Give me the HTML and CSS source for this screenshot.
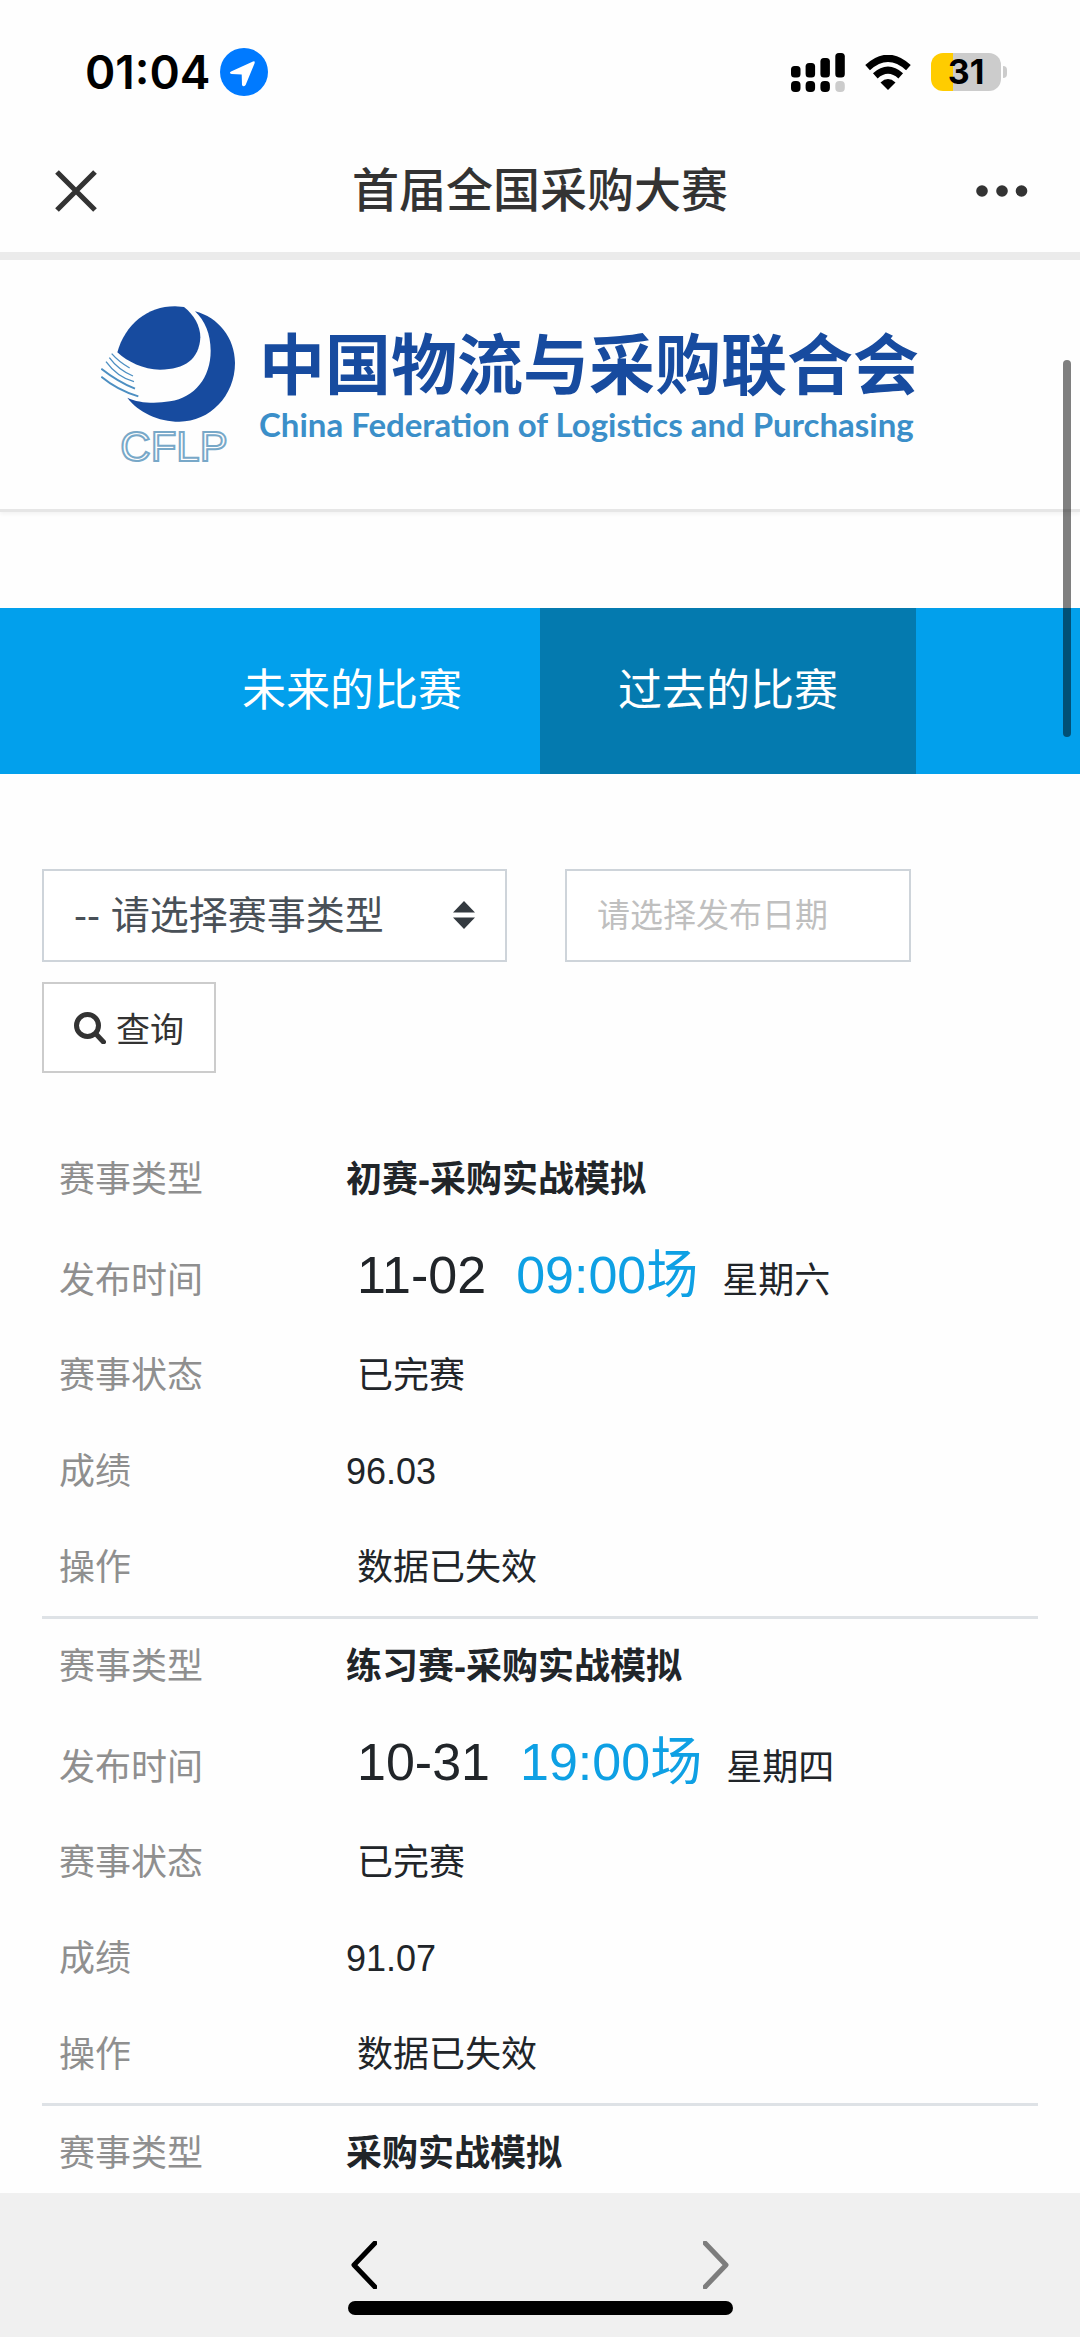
FILE: index.html
```html
<!DOCTYPE html>
<html lang="zh-CN">
<head>
<meta charset="utf-8">
<meta name="viewport" content="width=device-width, initial-scale=1">
<title>首届全国采购大赛</title>
<link rel="stylesheet" href="styles.css">
</head>
<body>
<div class="status-bar">
  <div class="status-left">
    <span class="clock">01:04</span>
    <svg class="location-icon" viewBox="0 0 48 48" aria-hidden="true"><circle cx="24" cy="24" r="24" fill="#007aff"/><path d="M11 23.400 33 13.400Q35.500 12.600 34.600 15.200L25.600 37Q23.400 39.600 22 37L21.700 26.600 11.600 26Q8.600 25 11 23.400Z" fill="#fff"/></svg>
  </div>
  <div class="status-right">
    <svg class="signal-icon" viewBox="0 0 54 39" aria-hidden="true"><g fill="#000"><rect x="0" y="13" width="9.500" height="11.500" rx="3.500"/><rect x="14.600" y="10" width="9.500" height="14.500" rx="3.500"/><rect x="29.400" y="5" width="9.500" height="19.500" rx="3.500"/><rect x="44.300" y="0" width="9.500" height="24.500" rx="3.500"/><rect x="0" y="28" width="9.500" height="11" rx="4"/><rect x="14.600" y="28" width="9.500" height="11" rx="4"/><rect x="29.400" y="28" width="9.500" height="11" rx="4"/></g><rect x="44.300" y="28" width="9.500" height="11" rx="4" fill="#ccc"/></svg>
    <svg class="wifi-icon" viewBox="0 0 46 35" aria-hidden="true"><path d="M2.600 12.600Q23-6 43.400 12.600" fill="none" stroke="#000" stroke-width="7"/><path d="M10.300 20.800Q23 9.500 35.700 20.800" fill="none" stroke="#000" stroke-width="7"/><path d="M15.500 27.400Q23 20.600 30.500 27.400L23 35Z"/></svg>
    <div class="battery"><span class="battery-body">31</span><span class="battery-tip"></span></div>
  </div>
</div>

<header class="title-bar">
  <button class="icon-button close-button" type="button" aria-label="关闭"><svg class="close-icon" viewBox="-3 -3 48 48"><path d="M2 2 40 40M40 2 2 40" stroke="#333" stroke-width="5.200"/></svg></button>
  <h1 class="title">首届全国采购大赛</h1>
  <button class="icon-button more-button" type="button" aria-label="更多"><svg class="more-icon" viewBox="0 0 52 12" fill="#333"><circle cx="6" cy="6" r="5.800"/><circle cx="26" cy="6" r="5.800"/><circle cx="45.500" cy="6" r="5.800"/></svg></button>
</header>

<main class="page">
  <div class="brand">
    <div class="brand-mark">
      <svg class="brand-ball" viewBox="63 77 402 346" aria-hidden="true"><g fill="#174b9f"><path d="M112 215C135 132 202 77 285 77L312 79C342 102 361 136 361 170C358 235 315 267 240 267C190 267 142 243 112 215Z"/><path d="M345 92C415 110 465 172 465 247C465 345 390 423 298 423C235 423 175 395 142 351C175 367 225 370 270 362C345 350 392 290 392 210C392 160 375 120 345 92Z"/></g><g fill="none" stroke="#4d8fc2" stroke-width="4"><path d="M95 219Q117 244 149 262"/><path d="M88 231Q115 268 159 286"/><path d="M78 243Q112 290 162 303"/><path stroke-width="6" d="M64 264Q112 302 165 324"/><path stroke-width="6" d="M64 288Q112 328 175 347"/></g></svg>
      <span class="brand-abbr">CFLP</span>
    </div>
    <div class="brand-text">
      <span class="brand-cn">中国物流与采购联合会</span>
      <span class="brand-en">China Federation of Logistics and Purchasing</span>
    </div>
  </div>

  <nav class="tabs">
    <a class="tab" href="#future">未来的比赛</a>
    <a class="tab tab-active" href="#past" aria-current="page">过去的比赛</a>
  </nav>

  <form class="filters">
    <div class="select-box">
      <select class="field type-select" aria-label="赛事类型"><option>-- 请选择赛事类型</option></select>
      <svg class="select-arrows" viewBox="0 0 22 28" aria-hidden="true"><path d="M11 0 22 11.500H0ZM0 16.500H22L11 28Z" fill="#343a40"/></svg>
    </div>
    <input class="field date-input" type="text" placeholder="请选择发布日期" aria-label="发布日期">
    <button class="search-button" type="button"><svg class="search-icon" viewBox="0 0 32 32" aria-hidden="true"><circle cx="13.500" cy="13.500" r="11" fill="none" stroke="#333" stroke-width="5"/><path d="M22 22 29.500 30" stroke="#333" stroke-width="5" stroke-linecap="round"/></svg>查询</button>
  </form>

  <table class="results">
    <tbody class="record">
      <tr><th scope="row">赛事类型</th><td class="name">初赛-采购实战模拟</td></tr>
      <tr class="time-row"><th scope="row">发布时间</th><td class="indent"><span class="date">11-02</span><span class="time">09:00场</span><span class="weekday">星期六</span></td></tr>
      <tr><th scope="row">赛事状态</th><td class="indent">已完赛</td></tr>
      <tr><th scope="row">成绩</th><td>96.03</td></tr>
      <tr><th scope="row">操作</th><td class="indent">数据已失效</td></tr>
    </tbody>
    <tbody class="record">
      <tr><th scope="row">赛事类型</th><td class="name">练习赛-采购实战模拟</td></tr>
      <tr class="time-row"><th scope="row">发布时间</th><td class="indent"><span class="date">10-31</span><span class="time">19:00场</span><span class="weekday">星期四</span></td></tr>
      <tr><th scope="row">赛事状态</th><td class="indent">已完赛</td></tr>
      <tr><th scope="row">成绩</th><td>91.07</td></tr>
      <tr><th scope="row">操作</th><td class="indent">数据已失效</td></tr>
    </tbody>
    <tbody class="record">
      <tr><th scope="row">赛事类型</th><td class="name">采购实战模拟</td></tr>
    </tbody>
  </table>
</main>

<footer class="toolbar">
  <div class="toolbar-buttons">
    <button class="icon-button" type="button" aria-label="后退"><svg class="chevron" viewBox="0 0 26 48"><path d="M24 2 3 24 24 46" fill="none" stroke="#000" stroke-width="5" stroke-linecap="round" stroke-linejoin="round"/></svg></button>
    <button class="icon-button" type="button" aria-label="前进"><svg class="chevron" viewBox="0 0 26 48"><path d="M2 2 23 24 2 46" fill="none" stroke="#7d7d7d" stroke-width="5" stroke-linecap="round" stroke-linejoin="round"/></svg></button>
  </div>
  <div class="home-indicator"></div>
</footer>
<div class="scroll-thumb"></div>
</body>
</html>
```
FILE: styles.css
```css
* {
  box-sizing: border-box;
}

body {
  margin: 0;
  height: 100vh;
  display: flex;
  flex-direction: column;
  position: relative;
  background: #fefefe;
  color: #212529;
  font-family: "Liberation Sans", "Noto Sans CJK SC", sans-serif;
  font-size: 36px;
}

button,
input,
select {
  font-family: inherit;
}

svg {
  display: block;
}

.status-bar {
  height: 130px;
  padding: 14px 73px 0 85px;
  display: flex;
  align-items: center;
  justify-content: space-between;
  flex: none;
}

.status-left,
.status-right {
  display: flex;
  align-items: center;
}

.status-left {
  gap: 10px;
}

.status-right {
  gap: 20px;
}

.clock {
  font: 600 46px/58px Inter, sans-serif;
  color: #000;
}

.location-icon {
  width: 48px;
  height: 48px;
}

.signal-icon {
  width: 54px;
  height: 39px;
}

.wifi-icon {
  width: 46px;
  height: 35px;
}

.battery {
  display: flex;
  align-items: center;
  gap: 2px;
}

.battery-body {
  width: 70px;
  border-radius: 12px;
  background: linear-gradient(to right, #fc0 31%, #ccc 31%);
  color: #000;
  font: 700 34px/38px Inter, sans-serif;
  text-align: center;
}

.battery-tip {
  width: 4px;
  height: 12px;
  border-radius: 0 6px 6px 0;
  background: #ccc;
}

.title-bar {
  height: 130px;
  padding: 0 52px;
  display: grid;
  grid-template-columns: 1fr auto 1fr;
  align-items: center;
  flex: none;
  border-bottom: 8px solid #ebebeb;
}

.title {
  margin: 0;
  color: #333;
  font-size: 47px;
  font-weight: 500;
  line-height: 60px;
}

.icon-button {
  padding: 0;
  border: 0;
  background: none;
}

.close-button {
  justify-self: start;
}

.more-button {
  justify-self: end;
}

.close-icon {
  width: 48px;
  height: 48px;
}

.more-icon {
  width: 52px;
  height: 12px;
}

.page {
  flex: 1;
  min-height: 0;
  overflow-y: auto;
  scrollbar-width: none;
}

.brand {
  padding: 46px 101px 42px;
  display: flex;
  gap: 24px;
  border-bottom: 3px solid #e6e6e6;
  box-shadow: 0 2px 4px rgba(0, 0, 0, 0.05);
}

.brand-mark {
  display: flex;
  flex-direction: column;
  align-items: center;
  gap: 5px;
}

.brand-ball {
  width: 134px;
  height: 116px;
}

.brand-abbr {
  font-size: 42px;
  line-height: 40px;
  padding-left: 12px;
  color: transparent;
  -webkit-text-stroke: 2px #78a8c8;
}

.brand-text {
  padding-top: 24px;
  display: flex;
  flex-direction: column;
  white-space: nowrap;
}

.brand-cn {
  color: #174b9f;
  font-size: 66px;
  font-weight: 700;
  line-height: 72px;
}

.brand-en {
  color: #3b8fc9;
  font: 700 33px/44px Lato, sans-serif;
}

.tabs {
  margin-top: 96px;
  display: flex;
  justify-content: center;
  background: #02a0ec;
}

.tab {
  padding: 53px 78px;
  color: #fff;
  font-size: 44px;
  line-height: 60px;
  text-decoration: none;
}

.tab-active {
  background: #047aaf;
}

.filters {
  padding: 95px 42px 59px;
  display: flex;
  flex-wrap: wrap;
  gap: 20px 58px;
}

.select-box {
  position: relative;
}

.field {
  height: 93px;
  padding: 0 30px;
  border: 2px solid #ced4da;
  border-radius: 0;
  background: #fff;
}

.type-select {
  width: 465px;
  appearance: none;
  color: #495057;
  font-size: 39px;
}

.select-arrows {
  position: absolute;
  right: 32px;
  top: 32px;
  width: 22px;
  height: 28px;
  pointer-events: none;
}

.date-input {
  width: 346px;
  font-size: 33px;
}

.date-input::placeholder {
  color: #bfbfbf;
}

.search-button {
  height: 91px;
  padding: 0 30px;
  display: flex;
  align-items: center;
  gap: 10px;
  border: 2px solid #ccc;
  background: #fff;
  color: #333;
  font-size: 34px;
}

.search-icon {
  width: 32px;
  height: 32px;
}

.results {
  width: calc(100% - 84px);
  margin: 0 42px;
  border-collapse: collapse;
  table-layout: fixed;
}

.record + .record {
  border-top: 3px solid #dee2e6;
}

th,
td {
  padding: 21px 0;
  line-height: 54px;
  text-align: left;
  vertical-align: baseline;
}

.time-row > * {
  padding-top: 20px;
  padding-bottom: 20px;
}

th {
  width: 304px;
  padding-left: 17px;
  color: #8f8f8f;
  font-weight: 400;
}

.name {
  font-weight: 700;
}

.indent {
  padding-left: 11px;
}

.date,
.time {
  font-size: 52px;
}

.time {
  margin: 0 24px 0 30px;
  color: #0ea0e4;
}

.toolbar {
  padding: 48px 0 22px;
  flex: none;
  display: flex;
  flex-direction: column;
  align-items: center;
  gap: 12px;
  background: #f0f0f0;
}

.toolbar-buttons {
  display: flex;
  gap: 326px;
}

.chevron {
  width: 26px;
  height: 48px;
}

.home-indicator {
  width: 385px;
  height: 14px;
  border-radius: 7px;
  background: #000;
}

.scroll-thumb {
  position: absolute;
  top: 360px;
  right: 9px;
  width: 8px;
  height: 377px;
  border-radius: 4px;
  background: rgba(0, 0, 0, 0.5);
}
```
